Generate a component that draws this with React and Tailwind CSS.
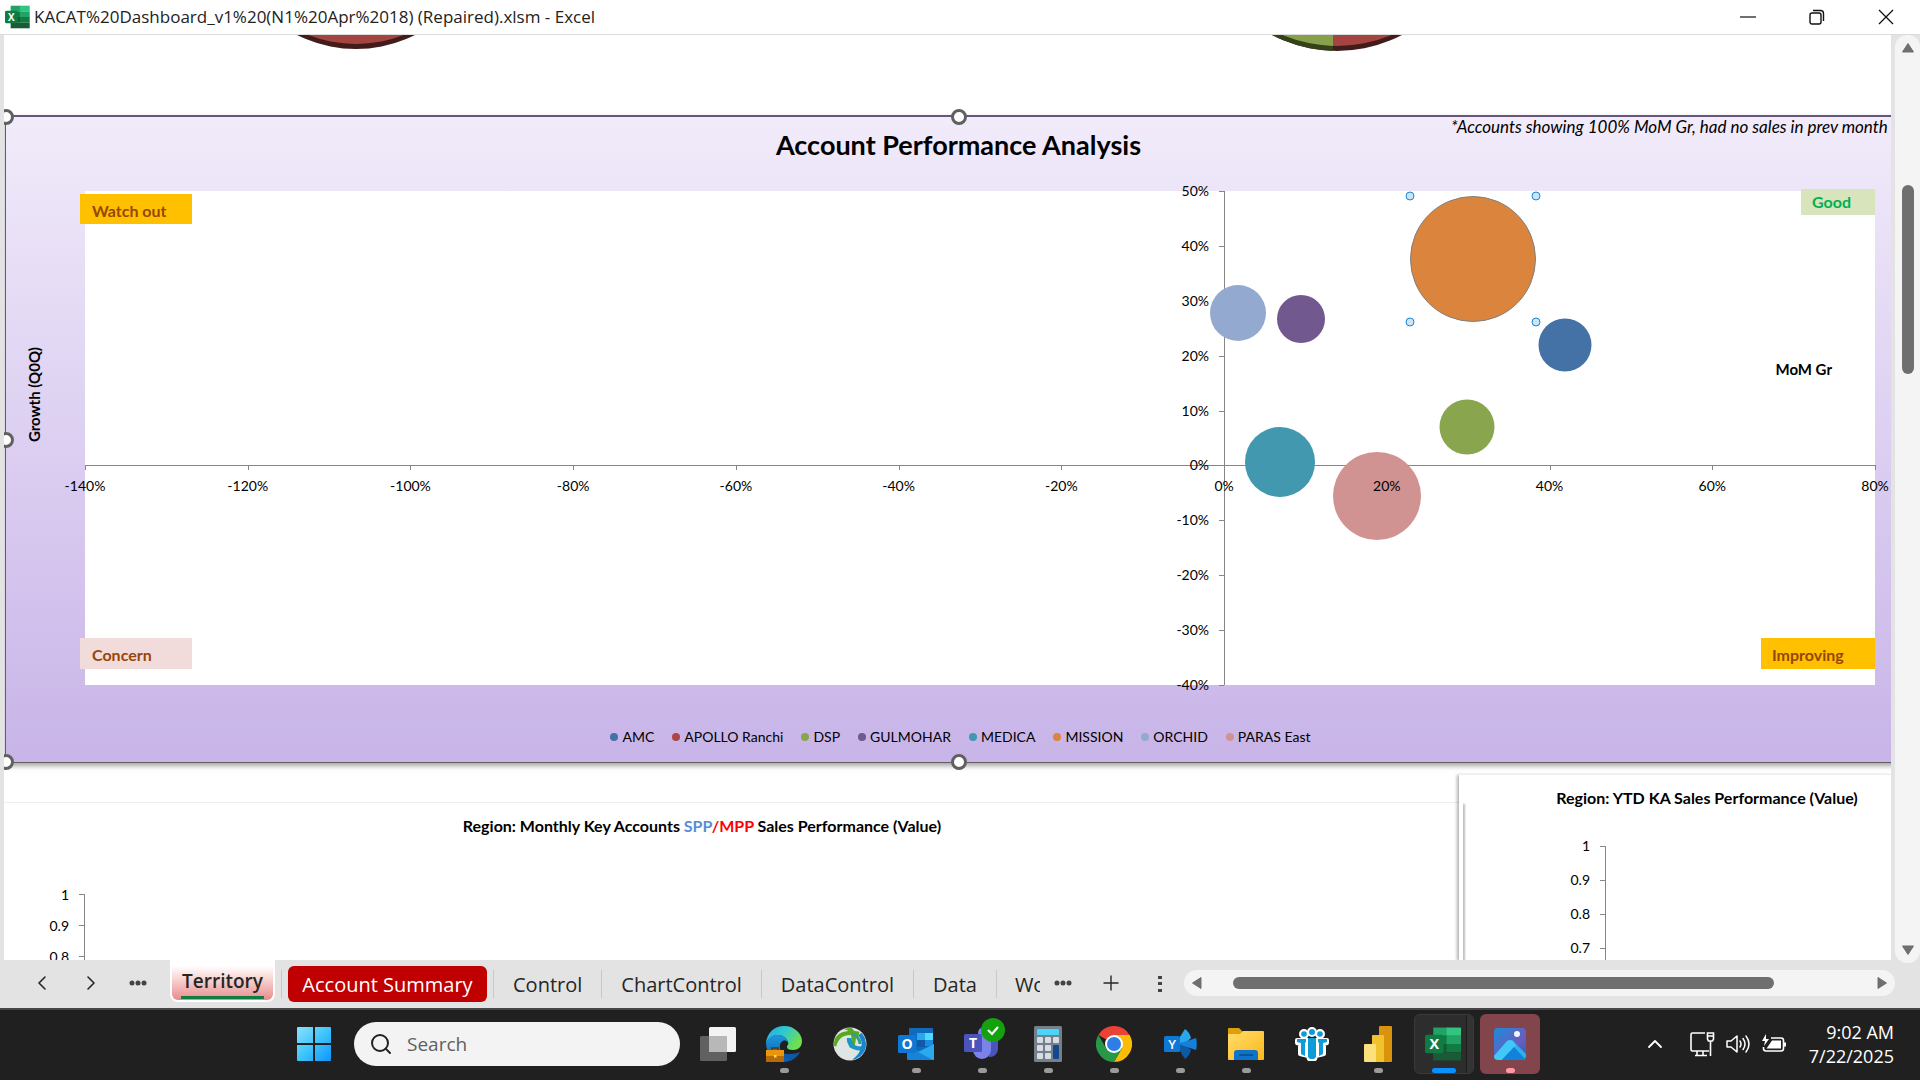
import React from 'react';
import { ChevronLeft, ChevronRight, ChevronUp, Plus, Search } from 'lucide-react';

const X_MIN = -140;
const X_MAX = 80;
const Y_MIN = -40;
const Y_MAX = 50;

const X_TICKS = [-140, -120, -100, -80, -60, -40, -20, 0, 20, 40, 60, 80];
const Y_TICKS = [50, 40, 30, 20, 10, 0, -10, -20, -30, -40];

const ACCOUNTS = [
  { name: 'AMC', x: 41.9, y: 21.9, size: 53, color: '#4472a7' },
  { name: 'APOLLO Ranchi', color: '#aa4643' },
  { name: 'DSP', x: 29.8, y: 7, size: 55, color: '#89a54e' },
  { name: 'GULMOHAR', x: 9.5, y: 26.6, size: 48, color: '#71588f' },
  { name: 'MEDICA', x: 6.9, y: 0.6, size: 70, color: '#4198af' },
  { name: 'MISSION', x: 30.6, y: 37.6, size: 126, color: '#db843d', selected: true },
  { name: 'ORCHID', x: 1.7, y: 27.7, size: 56, color: '#93a9cf' },
  { name: 'PARAS East', x: 18.8, y: -5.6, size: 88, color: '#d19392' },
];

const SHEETS = ['Control', 'ChartControl', 'DataControl', 'Data'];

const left = (x) => `${((x - X_MIN) / (X_MAX - X_MIN)) * 100}%`;
const top = (y) => `${((Y_MAX - y) / (Y_MAX - Y_MIN)) * 100}%`;

function ExcelIcon({ className }) {
  return (
    <svg viewBox="0 0 36 34" className={className} aria-hidden="true">
      <rect x="9" y="1" width="14" height="8" fill="#21a366" />
      <rect x="22" y="1" width="14" height="8" fill="#33c481" />
      <rect x="9" y="9" width="14" height="8" fill="#107c41" />
      <rect x="22" y="9" width="14" height="8" fill="#21a366" />
      <rect x="9" y="17" width="14" height="8" fill="#185c37" />
      <rect x="22" y="17" width="14" height="8" fill="#107c41" />
      <rect x="9" y="25" width="27" height="8" fill="#185c37" />
      <rect x="1" y="8" width="18" height="18" rx="2" fill="#107c41" />
      <text x="10" y="22" textAnchor="middle" fontFamily="Open Sans" fontWeight="700" fontSize="14" fill="#fff">X</text>
    </svg>
  );
}

function TitleBar() {
  return (
    <header className="flex h-[35px] shrink-0 items-center border-b border-[#dcdcdc] bg-white pl-1">
      <ExcelIcon className="h-6 w-[26px]" />
      <h1 className="ml-1 pb-px font-['Open_Sans',sans-serif] text-[17px] leading-6 text-[#222]">
        KACAT%20Dashboard_v1%20(N1%20Apr%2018) (Repaired).xlsm - Excel
      </h1>
      <div className="ml-auto flex h-full">
        <button aria-label="Minimize" className="flex w-[69px] items-center justify-center">
          <svg viewBox="0 0 16 16" className="size-4" stroke="#111" strokeWidth="1.2"><path d="M0 8h16" /></svg>
        </button>
        <button aria-label="Restore" className="flex w-[69px] items-center justify-center">
          <svg viewBox="0 0 16 16" className="size-4" fill="none" stroke="#111" strokeWidth="1.4">
            <rect x="1" y="4" width="11" height="11" rx="2" />
            <path d="M4 1.5h7.5a3 3 0 0 1 3 3V12" />
          </svg>
        </button>
        <button aria-label="Close" className="flex w-[69px] items-center justify-center">
          <svg viewBox="0 0 16 16" className="size-4" stroke="#111" strokeWidth="1.3"><path d="M1 1l14 14M15 1L1 15" /></svg>
        </button>
      </div>
    </header>
  );
}

// Bottom edges of the two 3-D pies that are scrolled out of view
function PieRow() {
  return (
    <div className="flex h-20 shrink-0 items-start">
      <svg viewBox="0 0 120 16" className="ml-[292px] h-4 w-[120px]">
        <circle cx="60" cy="-117" r="131" fill="#421c1b" />
        <circle cx="60" cy="-121" r="130" fill="#a54541" />
      </svg>
      <svg viewBox="0 0 130 18" className="ml-[856px] h-[18px] w-[130px]">
        <clipPath id="pieLeft"><rect width="61" height="18" /></clipPath>
        <circle cx="65" cy="-124" r="140" fill="#421c1b" />
        <circle cx="65" cy="-128" r="139" fill="#a54541" />
        <g clipPath="url(#pieLeft)">
          <circle cx="65" cy="-124" r="140" fill="#34421a" />
          <circle cx="65" cy="-128" r="139" fill="#86a04c" />
        </g>
      </svg>
    </div>
  );
}

function Handle({ className }) {
  return <span className={`absolute size-4 -translate-x-1/2 -translate-y-1/2 rounded-full border-3 border-[#606060] bg-white ${className}`} />;
}

function Bubble({ account }) {
  return (
    <div
      className="absolute -translate-x-1/2 -translate-y-1/2"
      style={{ left: left(account.x), top: top(account.y), width: account.size, height: account.size }}
    >
      <div
        className={`size-full rounded-full ${account.selected ? 'border border-[#808080]' : ''}`}
        style={{ backgroundColor: account.color }}
      />
      {account.selected &&
        ['left-0 top-0', 'left-full top-0', 'left-0 top-full', 'left-full top-full'].map((pos) => (
          <span key={pos} className={`absolute size-[9px] -translate-x-1/2 -translate-y-1/2 rounded-full border border-[#1b87d6] bg-[#cbe5f8] ${pos}`} />
        ))}
    </div>
  );
}

function Plot() {
  return (
    <div className="relative flex-1 bg-white text-sm leading-4">
      <div className="absolute inset-x-0 h-px bg-[#868686]" style={{ top: top(0) }} />
      <div className="absolute inset-y-0 w-px bg-[#868686]" style={{ left: left(0) }} />
      {X_TICKS.map((t) => (
        <span key={t} className="absolute h-[5px] w-px bg-[#868686]" style={{ left: left(t), top: top(0) }} />
      ))}
      {Y_TICKS.map((t) => (
        <span key={t} className="absolute h-px w-[5px] -translate-x-full bg-[#868686]" style={{ left: left(0), top: top(t) }} />
      ))}
      {ACCOUNTS.filter((a) => a.size).map((a) => <Bubble key={a.name} account={a} />)}
      {X_TICKS.map((t) => (
        <span key={t} className="absolute mt-[21px] -translate-1/2" style={{ left: left(t), top: top(0) }}>{t}%</span>
      ))}
      {Y_TICKS.map((t) => (
        <span key={t} className="absolute -translate-x-full -translate-y-1/2 pr-[15px]" style={{ left: left(0), top: top(t) }}>{t}%</span>
      ))}
      <span className="absolute top-[170px] right-[43px] text-[15px] leading-4 font-bold">MoM Gr</span>
      <div className="absolute top-[3px] -left-[5px] w-28 bg-[#ffc000] pt-[9px] pb-[5px] pl-3 text-base leading-4 font-bold text-[#974706]">Watch out</div>
      <div className="absolute -top-0.5 right-0 w-[74px] bg-[#d7e4bc] py-[5px] pl-[11px] text-base leading-4 font-bold text-[#00b050]">Good</div>
      <div className="absolute bottom-4 -left-[5px] w-28 bg-[#f2dcdb] pt-[9px] pb-1.5 pl-3 text-base leading-4 font-bold text-[#974706]">Concern</div>
      <div className="absolute right-0 bottom-4 w-[114px] bg-[#ffc000] pt-[9px] pb-1.5 pl-[11px] text-base leading-4 font-bold text-[#974706]">Improving</div>
    </div>
  );
}

function PerformanceChart() {
  return (
    <section className="relative ml-px flex h-[648px] w-[calc(100%+20px)] shrink-0 flex-col border border-t-2 border-[#606060] border-t-[#66557c] bg-linear-to-b from-[#f1ebfa] to-[#c8b4e8] shadow-[0_3px_5px_rgba(0,0,0,0.35)]">
      <div className="h-[74px]">
        <h2 className="pt-3 text-center text-[27px] leading-8 font-bold">Account Performance Analysis</h2>
        <p className="absolute top-0 right-0 w-[460px] text-[17px] leading-5 whitespace-nowrap italic">
          *Accounts showing 100% MoM Gr, had no sales in prev month
        </p>
      </div>
      <div className="flex h-[494px]">
        <div className="flex w-[79px] justify-center pt-[156px] pr-6">
          <span className="h-fit rotate-180 text-[15px] leading-4 font-bold [writing-mode:vertical-rl]">Growth (Q0Q)</span>
        </div>
        <Plot />
        <div className="w-9" />
      </div>
      <ul className="mt-11 flex justify-center gap-[18px] pl-1 text-sm leading-4">
        {ACCOUNTS.map((a) => (
          <li key={a.name} className="flex items-center gap-1">
            <span className="size-2 rounded-full" style={{ backgroundColor: a.color }} />
            {a.name}
          </li>
        ))}
      </ul>
      <Handle className="top-0 left-0" />
      <Handle className="top-0 left-1/2" />
      <Handle className="top-1/2 left-0" />
      <Handle className="top-full left-0" />
      <Handle className="top-full left-1/2" />
    </section>
  );
}

function ValueAxis({ labels, rowClass, lineClass }) {
  return (
    <div className="flex text-sm leading-4">
      <div className="w-8 text-right">
        {labels.map((l) => <div key={l} className={`flex items-center justify-end ${rowClass}`}>{l}</div>)}
      </div>
      <div className={`ml-2.5 w-1.5 border-r border-[#868686] ${lineClass}`}>
        {labels.map((l) => <div key={l} className={`border-t border-[#868686] ${rowClass}`} />)}
      </div>
    </div>
  );
}

function Sheet() {
  return (
    <main className="flex min-w-0 flex-1 flex-col overflow-hidden border-l-4 border-[#e3e3e3] bg-white font-[Lato,sans-serif] text-black">
      <PieRow />
      <PerformanceChart />
      <div className="flex min-h-0 flex-1">
        <section className="mt-[39px] flex-1 border-t border-[#eee] pl-[33px]">
          <h3 className="mr-[92px] pt-[15px] text-center text-base leading-4 font-bold">
            Region: Monthly Key Accounts <span className="text-[#558ed5]">SPP</span><span className="text-[#f00]">/MPP</span> Sales Performance (Value)
          </h3>
          <div className="mt-[45px]">
            <ValueAxis labels={['1', '0.9', '0.8']} rowClass="h-[31px]" lineClass="mt-[15px]" />
          </div>
        </section>
        <section className="mt-[11px] flex w-[432px] border-t border-[#eee] bg-white shadow-[-2px_1px_3px_rgba(0,0,0,0.3)]">
          <div className="mt-7 w-1 shrink-0 shadow-[2px_1px_2px_rgba(0,0,0,0.25)]" />
          <div className="flex-1">
            <h3 className="ml-[60px] pt-[15px] text-center text-base leading-4 font-bold">Region: YTD KA Sales Performance (Value)</h3>
            <div className="mt-[23px] ml-[95px]">
              <ValueAxis labels={['1', '0.9', '0.8', '0.7']} rowClass="h-[34px]" lineClass="mt-[17px]" />
            </div>
          </div>
        </section>
      </div>
    </main>
  );
}

function VerticalScroll() {
  return (
    <div className="z-10 -mb-[3px] flex w-[29px] shrink-0 bg-[#e3e3e3] pl-1">
      <div className="flex flex-1 flex-col items-center rounded-xl bg-[#f4f4f4] py-[7px]">
        <button aria-label="Scroll up" className="h-[11px]">
          <svg viewBox="0 0 14 11" className="h-[11px] w-3.5"><path d="M7 1.5L12.5 10h-11z" fill="#6f6f6f" stroke="#6f6f6f" strokeLinejoin="round" /></svg>
        </button>
        <div className="mt-[132px] h-[189px] w-3 rounded-full bg-[#6f6f6f]" />
        <button aria-label="Scroll down" className="mt-auto h-[11px]">
          <svg viewBox="0 0 14 11" className="h-[11px] w-3.5"><path d="M7 9.5L12.5 1h-11z" fill="#6f6f6f" stroke="#6f6f6f" strokeLinejoin="round" /></svg>
        </button>
      </div>
    </div>
  );
}

function Dots() {
  return (
    <svg viewBox="0 0 18 6" className="h-1.5 w-[18px]" fill="#444">
      <circle cx="3" cy="3" r="2.5" /><circle cx="9" cy="3" r="2.5" /><circle cx="15" cy="3" r="2.5" />
    </svg>
  );
}

function SheetTabs() {
  return (
    <nav className="flex h-12 shrink-0 items-start bg-[#e3e3e3] font-['Open_Sans',sans-serif] text-xl leading-6 text-[#262626]">
      <div className="flex h-[46px] w-[170px] items-center pl-[30px]">
        <button aria-label="Previous sheet"><ChevronLeft className="size-6" strokeWidth={1.6} /></button>
        <button aria-label="Next sheet" className="ml-[25px]"><ChevronRight className="size-6" strokeWidth={1.6} /></button>
        <button aria-label="More sheets" className="ml-[26px]"><Dots /></button>
      </div>
      <button className="h-[42px] w-[105px] rounded-b-lg border-2 border-t-0 border-white bg-linear-to-b from-white from-15% to-[#e58c8c] px-[9px] text-[19px] leading-6 font-semibold">
        <span className="block border-b-3 border-[#107c41] pt-[7px] pb-[3px]">Territory</span>
      </button>
      <span className="mt-2.5 ml-1.5 h-7 w-px bg-[#c8c8c8]" />
      <button className="mt-1.5 ml-1.5 h-9 w-[199px] rounded-md bg-[#c00000] pt-0.5 text-white">Account Summary</button>
      <span className="mt-2.5 ml-1.5 h-7 w-px bg-[#c8c8c8]" />
      {SHEETS.map((s) => (
        <button key={s} className="mt-2.5 h-7 border-r border-[#c8c8c8] px-[19px] pt-0.5">{s}</button>
      ))}
      <button className="mt-2.5 ml-[18px] h-7 w-[25px] overflow-hidden pt-0.5 text-left">Working</button>
      <button aria-label="All sheets" className="mt-5 ml-3.5"><Dots /></button>
      <button aria-label="New sheet" className="mt-[11px] ml-[27px]"><Plus className="size-6" strokeWidth={1.4} /></button>
      <svg viewBox="0 0 4 18" className="mt-[15px] ml-[35px] h-[18px] w-1 shrink-0" fill="#444"><path d="M0 1h4v3H0zM0 7h4v3H0zM0 14h4v3H0z" /></svg>
      <div className="mt-2.5 mr-[25px] ml-[22px] flex h-[26px] flex-1 items-center rounded-full bg-[#f4f4f4] px-[7px]">
        <button aria-label="Scroll left">
          <svg viewBox="0 0 11 14" className="h-3.5 w-[11px]"><path d="M1.500 7L10 1.500v11z" fill="#6f6f6f" stroke="#6f6f6f" strokeLinejoin="round" /></svg>
        </button>
        <div className="ml-[31px] h-3 w-[541px] rounded-full bg-[#6f6f6f]" />
        <button aria-label="Scroll right" className="ml-auto">
          <svg viewBox="0 0 11 14" className="h-3.5 w-[11px]"><path d="M9.500 7L1 1.500v11z" fill="#6f6f6f" stroke="#6f6f6f" strokeLinejoin="round" /></svg>
        </button>
      </div>
    </nav>
  );
}

function StartIcon() {
  return (
    <svg viewBox="0 0 36 36" className="size-9">
      <defs>
        <linearGradient id="win" x1="0" y1="0" x2="36" y2="36" gradientUnits="userSpaceOnUse">
          <stop offset="0" stopColor="#8fe2ff" /><stop offset=".5" stopColor="#3fc5fb" /><stop offset="1" stopColor="#0a93ff" />
        </linearGradient>
      </defs>
      <path d="M1 2a1 1 0 0 1 1-1h15v16H1zM19 1h15a1 1 0 0 1 1 1v15H19zM1 19h16v16H2a1 1 0 0 1-1-1zM19 19h16v15a1 1 0 0 1-1 1H19z" fill="url(#win)" />
    </svg>
  );
}

function TaskViewIcon() {
  return (
    <svg viewBox="0 0 36 36" className="size-9">
      <rect x="9" y="1" width="27" height="25" rx="1.500" fill="#f3f3f3" />
      <rect x="0" y="10" width="27" height="25" rx="1.500" fill="#777" fillOpacity=".75" />
      <path d="M9 10h18v16H9z" fill="#b8b8b8" />
    </svg>
  );
}

function EdgeIcon() {
  return (
    <svg viewBox="0 0 36 36" className="size-9">
      <defs>
        <linearGradient id="edgeTop" x1="0" y1="0" x2="1" y2=".5">
          <stop offset="0" stopColor="#2aa7e8" /><stop offset=".5" stopColor="#2fc8d0" /><stop offset="1" stopColor="#6fe04c" />
        </linearGradient>
        <linearGradient id="edgeLeft" x1="0" y1="0" x2="0" y2="1">
          <stop offset="0" stopColor="#1f97dc" /><stop offset="1" stopColor="#0b5cb0" />
        </linearGradient>
      </defs>
      <path d="M12 14c-2 9 3 15 12 14 4 0 7-1 10-2-3 6-9 10-16 10-8 0-15-6-16-14z" fill="#0c59a4" />
      <path d="M0 17C1 12 6 9 12 9c5 0 9 3 10 7-4-4-9 0-8 6 1 5 3 10 8 13-13 3-22-7-22-18z" fill="url(#edgeLeft)" />
      <path d="M0 17C1 7 8 0 18 0c11 0 18 8 18 15 0 6-4 9-9 9-4 0-6-1-6-3s2-2 1-5c-1-4-5-7-10-7C6 9 2 12 0 17z" fill="url(#edgeTop)" />
      <path d="M6 24v-2h6v2" fill="none" stroke="#5b3606" strokeWidth="1.500" />
      <rect x="0" y="24" width="18" height="12" fill="#b96a05" />
      <rect x="0" y="24" width="18" height="6" fill="#ea950e" />
      <rect x="8" y="29" width="2.500" height="2.500" fill="#ffe14d" />
    </svg>
  );
}

function GlobeIcon() {
  return (
    <svg viewBox="0 0 36 36" className="size-9">
      <clipPath id="globe"><circle cx="18" cy="18" r="16" /></clipPath>
      <circle cx="18" cy="18" r="16.500" fill="#dfe5e3" />
      <g clipPath="url(#globe)" fill="none" strokeWidth="4.500">
        <path d="M2 20C5 8 15 5 27 8" stroke="#5aa81f" />
        <path d="M12 1c10 1 12 12 7 21" stroke="#5aa81f" />
        <path d="M17 12c0 9 8 12 17 10" stroke="#1e93c6" />
        <path d="M28 8c7 8 4 20-6 27" stroke="#1786cf" />
        <path d="M20 8c4 1 8 5 8 10" stroke="#2f9f8b" strokeWidth="3" />
      </g>
    </svg>
  );
}

function OutlookIcon() {
  return (
    <svg viewBox="0 0 36 36" className="size-9">
      <rect x="11" y="2" width="24" height="24" rx="1" fill="#0f6cbd" />
      <path d="M19 7h8v7h-8z" fill="#28a8ea" />
      <path d="M27 7h8v7h-8z" fill="#50d9ff" />
      <path d="M19 14h8v7h-8z" fill="#0f5aa8" />
      <path d="M27 14h8v6h-8z" fill="#1c8ae0" />
      <path d="M9 20l13 6 14-8v15a1 1 0 0 1-1 1H10a1 1 0 0 1-1-1z" fill="#1683d8" />
      <path d="M36 18v15a1 1 0 0 1-1 1L20 26z" fill="#2aa9ef" />
      <rect x="0" y="9" width="18" height="18" rx="1.500" fill="#0f78d4" />
      <text x="9" y="23" textAnchor="middle" fontFamily="Open Sans" fontWeight="700" fontSize="14" fill="#fff">O</text>
    </svg>
  );
}

function TeamsIcon() {
  return (
    <svg viewBox="0 0 46 46" className="size-[46px]">
      <circle cx="25" cy="16" r="6" fill="#7b83eb" />
      <path d="M30 20h9v12a8 8 0 0 1-9 8z" fill="#4b53bc" />
      <path d="M14 20h18v13a9 9 0 0 1-18 0z" fill="#7b83eb" />
      <rect x="5" y="17" width="18" height="18" rx="1.500" fill="#4b53bc" />
      <text x="14" y="31" textAnchor="middle" fontFamily="Open Sans" fontWeight="700" fontSize="14" fill="#fff">T</text>
      <circle cx="34" cy="13" r="12" fill="#13a10e" />
      <path d="M29 13l4 4 6-7" fill="none" stroke="#fff" strokeWidth="2.200" />
    </svg>
  );
}

function CalculatorIcon() {
  return (
    <svg viewBox="0 0 28 36" className="h-9 w-7">
      <rect width="28" height="36" rx="1.500" fill="#75808a" />
      <rect x="3" y="3" width="22" height="6" rx=".8" fill="#47d5f8" />
      <g fill="#d7dde3">
        <rect x="3" y="11" width="6" height="6" rx="1" /><rect x="11" y="11" width="6" height="6" rx="1" /><rect x="19" y="11" width="6" height="6" rx="1" />
        <rect x="3" y="19" width="6" height="6" rx="1" /><rect x="11" y="19" width="6" height="6" rx="1" />
        <rect x="3" y="27" width="6" height="6" rx="1" /><rect x="11" y="27" width="6" height="6" rx="1" />
      </g>
      <rect x="19" y="19" width="6" height="14" rx="1" fill="#12488f" />
    </svg>
  );
}

function ChromeIcon() {
  return (
    <svg viewBox="0 0 36 36" className="size-9">
      <path d="M18 18L2.400 9A18 18 0 0 1 33.600 9z" fill="#ea4335" />
      <path d="M18 9h15.600A18 18 0 0 1 18 36l7.800-13.500z" fill="#fbbc05" />
      <path d="M25.800 22.500L18 36A18 18 0 0 1 2.400 9l7.800 13.500z" fill="#279847" />
      <circle cx="18" cy="18" r="9" fill="#fff" />
      <circle cx="18" cy="18" r="7" fill="#2f7de9" />
    </svg>
  );
}

function YammerIcon() {
  return (
    <svg viewBox="0 0 36 36" className="size-9">
      <path d="M16 14l7-11c3 2 5 5 6 9l-9 8z" fill="#28a8ea" />
      <path d="M16 22l7 11c3-2 5-5 6-9l-9-8z" fill="#0a5aa6" />
      <path d="M16 18l18-6c1 4 1 8 0 12z" fill="#1480dc" />
      <rect x="2" y="10" width="16" height="16" rx="1.500" fill="#0f78d4" />
      <text x="10" y="23" textAnchor="middle" fontFamily="Open Sans" fontWeight="600" fontSize="13" fill="#fff">Y</text>
    </svg>
  );
}

function FolderIcon() {
  return (
    <svg viewBox="0 0 36 36" className="size-9">
      <defs>
        <linearGradient id="folder" x1="0" y1="0" x2="1" y2="1"><stop offset="0" stopColor="#ffdc6b" /><stop offset="1" stopColor="#fdb91a" /></linearGradient>
      </defs>
      <path d="M0 3a1 1 0 0 1 1-1h10l4 4v4H0z" fill="#e09f0a" />
      <path d="M0 8h12l3-3h20a1 1 0 0 1 1 1v27a1 1 0 0 1-1 1H1a1 1 0 0 1-1-1z" fill="url(#folder)" />
      <path d="M6 34v-7a3 3 0 0 1 3-3h18a3 3 0 0 1 3 3v7z" fill="#0f74c9" />
      <path d="M11 29h14" stroke="#094b89" strokeWidth="1.500" />
    </svg>
  );
}

function PeopleIcon() {
  return (
    <svg viewBox="0 0 36 36" className="size-9">
      <g fill="#fff" stroke="#fff" strokeWidth="4" strokeLinejoin="round">
        <circle cx="18" cy="6" r="3" /><circle cx="10" cy="8" r="3" /><circle cx="26" cy="8" r="3" />
        <path d="M3 14h30v3l-3 1v10l-8 2-1 3h-6l-1-3-8-2V18l-3-1z" />
      </g>
      <g fill="#0f9bd8">
        <circle cx="18" cy="6" r="3" /><circle cx="10" cy="8" r="2.800" /><circle cx="26" cy="8" r="2.800" />
        <path d="M14 12h8v19l-2 2h-4l-2-2z" />
        <path d="M3 13h9v3l-1 1v13l-4-2V17l-4-1zM33 13h-9v3l1 1v13l4-2V17l4-1z" />
      </g>
    </svg>
  );
}

function PowerBiIcon() {
  return (
    <svg viewBox="0 0 28 36" className="h-9 w-7">
      <rect x="15" width="13" height="36" rx="1" fill="#d9930d" />
      <rect x="8" y="9" width="12" height="27" rx="1" fill="#f2c12e" />
      <rect y="18" width="12" height="18" rx="1" fill="#fbe07c" />
    </svg>
  );
}

function PhotosIcon() {
  return (
    <svg viewBox="0 0 36 36" className="size-9">
      <defs>
        <linearGradient id="sky" x1="0" y1="0" x2="1" y2="1"><stop offset="0" stopColor="#1291e0" /><stop offset=".6" stopColor="#6a5cc0" /><stop offset="1" stopColor="#1467b8" /></linearGradient>
        <clipPath id="frame"><rect x="2" y="2" width="32" height="32" rx="4" /></clipPath>
      </defs>
      <g clipPath="url(#frame)">
        <rect width="36" height="36" fill="url(#sky)" />
        <path d="M20 14l15 15v7h-5L14 20z" fill="#2bb1f0" />
        <path d="M0 32l15-17q3-2 6 0l3 4L8 36H0z" fill="#40c8f8" />
        <path d="M8 36l14-15 14 15z" fill="#0f83dc" />
      </g>
      <circle cx="25" cy="8" r="3" fill="#f4f4fb" />
    </svg>
  );
}

const APPS = [
  { name: 'Task view', icon: <TaskViewIcon /> },
  { name: 'Edge', icon: <EdgeIcon />, running: true },
  { name: 'Secure Client', icon: <GlobeIcon /> },
  { name: 'Outlook', icon: <OutlookIcon />, running: true },
  { name: 'Teams', icon: <span className="-mt-2"><TeamsIcon /></span>, running: true },
  { name: 'Calculator', icon: <CalculatorIcon />, running: true },
  { name: 'Chrome', icon: <ChromeIcon />, running: true },
  { name: 'Viva Engage', icon: <YammerIcon />, running: true },
  { name: 'File Explorer', icon: <FolderIcon />, running: true },
  { name: 'Directory', icon: <PeopleIcon /> },
  { name: 'Power BI', icon: <PowerBiIcon />, running: true },
];

function Taskbar() {
  return (
    <footer className="flex h-[72px] shrink-0 items-center border-t-2 border-[#464646] bg-[#202020] pr-[26px] pb-0.5 pl-[284px] font-['Open_Sans',sans-serif]">
      <button aria-label="Start" className="flex w-[60px] justify-center"><StartIcon /></button>
      <label className="mx-2.5 mr-2 flex h-11 w-[326px] items-center rounded-full bg-[#f3f3f3] pl-[15px]">
        <Search className="size-6 text-[#222]" strokeWidth={2} />
        <input type="text" aria-label="Search" placeholder="Search" className="ml-3.5 w-52 bg-transparent text-[19px] leading-6 placeholder-[#606060] outline-none" />
      </label>
      <div className="flex gap-1.5">
        {APPS.map((a) => (
          <button key={a.name} aria-label={a.name} className="relative flex size-[60px] items-center justify-center">
            {a.icon}
            {a.running && <span className="absolute bottom-px h-[5px] w-[9px] rounded-full bg-[#9a9a9a]" />}
          </button>
        ))}
        <button aria-label="Excel" className="relative flex size-[60px] items-center justify-center rounded-md border border-[#3a3a3a] bg-[#2d2d2d]">
          <span className="absolute inset-y-0 right-0 w-[7px] rounded-r-md border-l border-[#1c1c1c] bg-[#333]" />
          <ExcelIcon className="mr-1 h-9 w-[37px]" />
          <span className="absolute bottom-0 h-[5px] w-6 rounded-full bg-[#0a91ff]" />
        </button>
        <button aria-label="Photos" className="relative flex size-[60px] items-center justify-center rounded-md bg-[#81454b]">
          <PhotosIcon />
          <span className="absolute bottom-px h-[5px] w-[9px] rounded-full bg-[#ff99a4]" />
        </button>
      </div>
      <div className="ml-auto flex items-center text-white">
        <button aria-label="Show hidden icons"><ChevronUp className="size-6" strokeWidth={1.8} /></button>
        <button aria-label="Network" className="ml-[22px]">
          <svg viewBox="0 0 26 26" className="size-[26px]" fill="none" stroke="#fff" strokeWidth="1.600">
            <path d="M16 2H3.500A1.500 1.500 0 0 0 2 3.500v15A1.500 1.500 0 0 0 3.500 20H20M8 20v4M6 24.500h12M14 20v4" />
            <path d="M18.500 2h6v6l-1 2h-4l-1-2zM21.500 10v15M18.500 5h6" />
          </svg>
        </button>
        <button aria-label="Volume" className="ml-2.5">
          <svg viewBox="0 0 26 26" className="size-[26px]" fill="none" stroke="#fff" strokeWidth="1.500" strokeLinecap="round" strokeLinejoin="round">
            <path d="M2 10h4l6-5v16l-6-5H2z" />
            <path d="M15 10q2 3 0 6M18 7.500q4 5.500 0 11M21 5q6 8 0 16" />
          </svg>
        </button>
        <button aria-label="Battery" className="ml-2.5">
          <svg viewBox="0 0 26 22" className="h-[22px] w-[26px]" fill="none" stroke="#fff" strokeWidth="1.600">
            <path d="M10 5h10a2.500 2.500 0 0 1 2.500 2.500v8A2.500 2.500 0 0 1 20 18H5a2.500 2.500 0 0 1-2.500-2.500V14" />
            <path d="M11 7.500h9v8H5.500z" fill="#fff" stroke="none" />
            <path d="M23 9.500h2v4h-2z" fill="#fff" stroke="none" />
            <path d="M5 1L1 8h3l-1 5 5-7H5z" fill="#fff" stroke="none" />
          </svg>
        </button>
        <time className="ml-[22px] text-right text-lg leading-6">
          9:02 AM<br />7/22/2025
        </time>
      </div>
    </footer>
  );
}

export default function App() {
  return (
    <div className="flex h-screen flex-col overflow-hidden bg-[#e3e3e3]">
      <TitleBar />
      <div className="flex min-h-0 flex-1">
        <Sheet />
        <VerticalScroll />
      </div>
      <SheetTabs />
      <Taskbar />
    </div>
  );
}
